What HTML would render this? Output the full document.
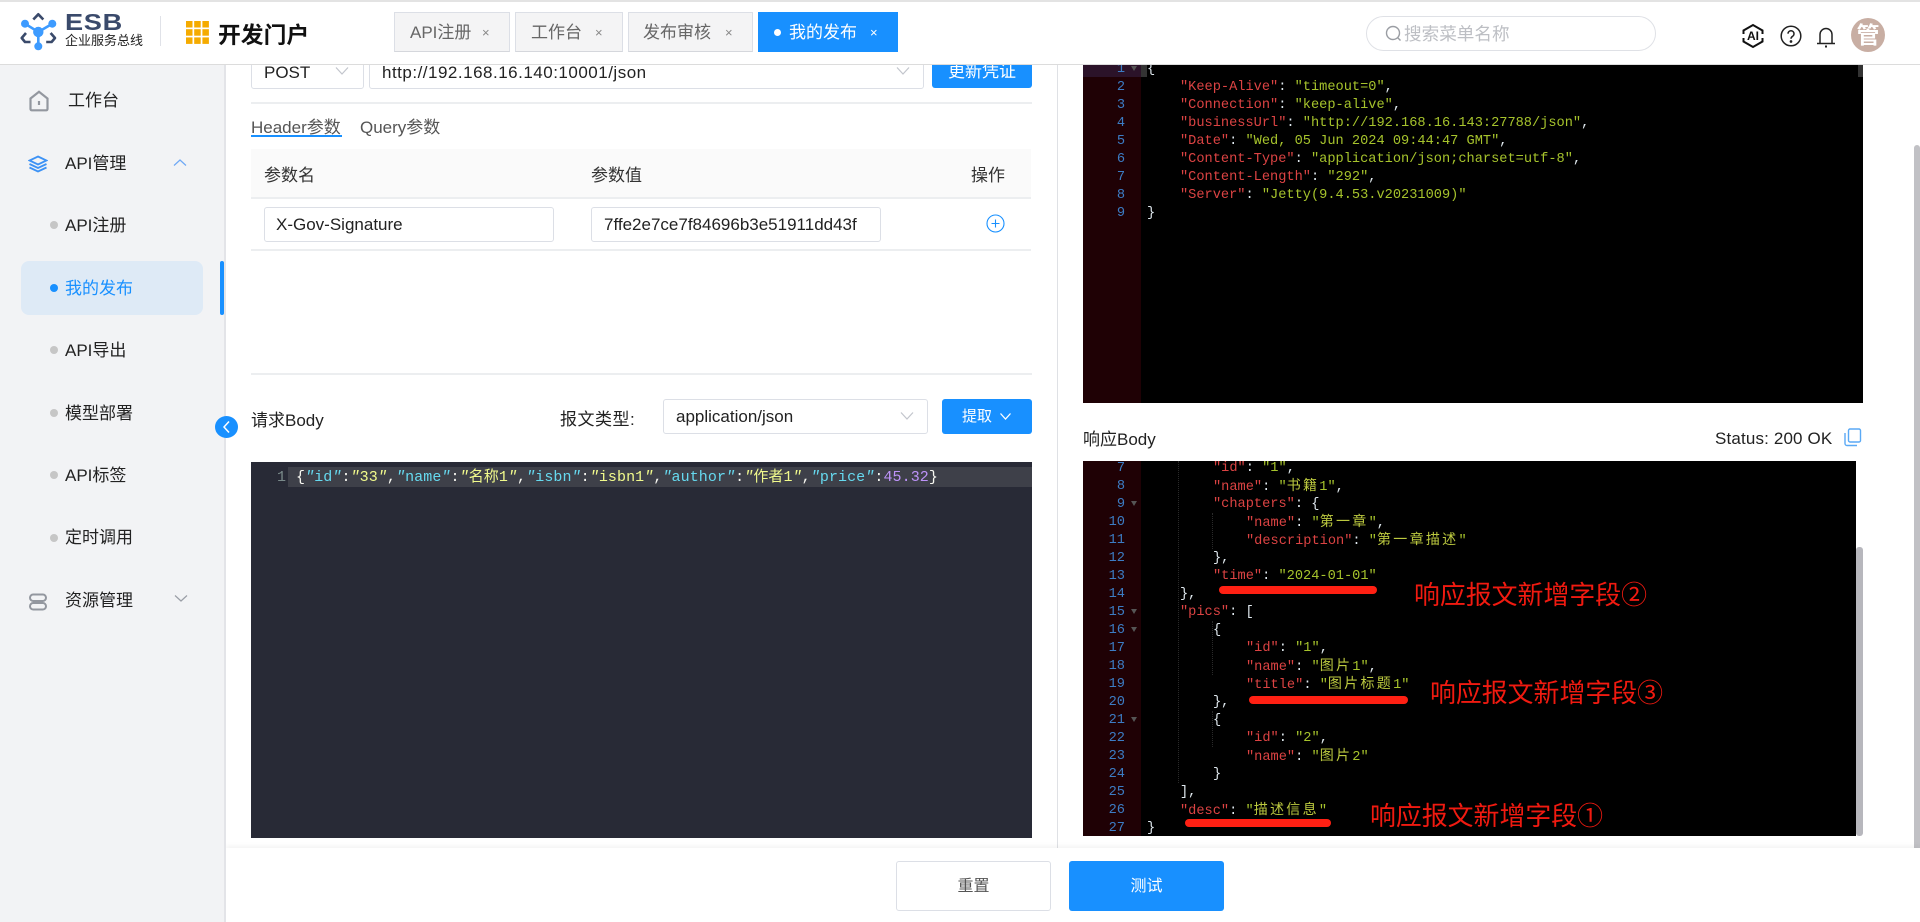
<!DOCTYPE html>
<html lang="zh-CN">
<head>
<meta charset="utf-8">
<title>ESB 开发门户</title>
<style>
*{box-sizing:border-box;margin:0;padding:0}
html,body{width:1920px;height:922px;overflow:hidden;background:#fff;font-family:"Liberation Sans","Noto Sans CJK SC",sans-serif;color:#222}
.a{position:absolute}
.t{position:absolute;white-space:nowrap;line-height:20px;height:20px;font-size:17px}
#hdr{position:absolute;left:0;top:0;width:1920px;height:65px;background:#fff;border-top:2px solid #e3e3e3;border-bottom:1px solid #dcdcdc;z-index:10}
.tab{position:absolute;top:12px;height:40px;background:#f4f4f5;border:1px solid #dcdfe6;border-bottom:1px solid #d5d7dc}
.x{position:absolute;white-space:nowrap;font-size:13px;line-height:20px;color:#888;top:23px;z-index:11}
#side{position:absolute;left:0;top:64px;width:226px;height:858px;background:#f2f3f5;border-right:2px solid #e3e4e8}
.box{position:absolute;background:#fff;border:1px solid #dcdfe6;border-radius:3px}
.dot{position:absolute;width:8px;height:8px;border-radius:50%;background:#c6c6c6;left:50px}
.hr{position:absolute;height:2px;background:#eceef0}
.btn{position:absolute;background:#1890ff;border-radius:3px;color:#fff}
.ed{position:absolute;background:#000;overflow:hidden}
.gut{position:absolute;left:0;top:0;width:58px;height:100%;background:#1f0105}
.l{position:absolute;white-space:pre;font-family:"Liberation Mono","Noto Sans CJK SC",monospace;font-size:13.65px;line-height:18px;height:18px;color:#dfe8ee;transform:translateY(2px)}
.n{position:absolute;width:42px;left:0;text-align:right;font-family:"Liberation Mono",monospace;font-size:13.65px;line-height:18px;height:18px;color:#3c7cc4;transform:translateY(2px)}
.k{color:#dc4343}.s{color:#a6c32c}.c{color:#bcc93f;letter-spacing:2.3px;font-size:14px}
.f{position:absolute;left:48px;width:0;height:0;border-left:3.5px solid transparent;border-right:3.5px solid transparent;border-top:5px solid #555}
.ann{position:absolute;white-space:nowrap;font-size:25.9px;line-height:30px;height:30px;color:#f01a10}
.stroke{position:absolute;height:8px;border-radius:4px;background:#ff2013}
.guide{position:absolute;width:0;border-left:1px dotted #2a2a2a}
#req{position:absolute;left:251px;top:462px;width:781px;height:376px;background:#282a36;overflow:hidden}
#req .cl{position:absolute;left:37px;top:5px;width:744px;height:20px;background:#3e4049}
#req pre{position:absolute;left:45px;top:6px;line-height:20px;font-family:"Liberation Mono","Noto Sans CJK SC",monospace;font-size:15px;letter-spacing:.08px;color:#f8f8f2;white-space:pre}
.q{color:#66d9ef}.y{color:#f1fa8c}.m{color:#bd93f9}.i{font-style:italic}
</style>
</head>
<body>

<!-- main left panel -->
<div class="box" style="left:251px;top:44px;width:113px;height:45px"></div>
<div class="t" style="left:264px;top:63px">POST</div>
<svg class="a" style="left:335px;top:66px" width="14" height="10" fill="none" stroke="#c2c5cc" stroke-width="1.2"><path d="M1 1.5L7 8L13 1.5"/></svg>
<div class="box" style="left:369px;top:44px;width:555px;height:45px"></div>
<div class="t" style="left:382px;top:63px;letter-spacing:.5px">http://192.168.16.140:10001/json</div>
<svg class="a" style="left:896px;top:66px" width="14" height="10" fill="none" stroke="#c2c5cc" stroke-width="1.2"><path d="M1 1.5L7 8L13 1.5"/></svg>
<div class="btn" style="left:932px;top:44px;width:100px;height:44px"></div>
<div class="t" style="left:948px;top:62px;color:#fff;font-size:17px">更新凭证</div>
<div class="hr" style="left:251px;top:102px;width:781px"></div>

<div class="t" style="left:251px;top:118px;color:#555">Header参数</div>
<div class="a" style="left:251px;top:135px;width:91px;height:2px;background:#1890ff"></div>
<div class="t" style="left:360px;top:118px;color:#555">Query参数</div>

<div class="a" style="left:251px;top:149px;width:780px;height:50px;background:#fafafa;border-bottom:2px solid #eceef0"></div>
<div class="t" style="left:264px;top:166px;color:#333">参数名</div>
<div class="t" style="left:591px;top:166px;color:#333">参数值</div>
<div class="t" style="left:971px;top:166px;color:#333">操作</div>

<div class="box" style="left:264px;top:207px;width:290px;height:35px"></div>
<div class="t" style="left:276px;top:215px">X-Gov-Signature</div>
<div class="box" style="left:591px;top:207px;width:290px;height:35px"></div>
<div class="t" style="left:604px;top:215px;width:257px;overflow:hidden">7ffe2e7ce7f84696b3e51911dd43f</div>
<svg class="a" style="left:986px;top:214px" width="19" height="19" fill="none" stroke="#1890ff" stroke-width="1.1"><circle cx="9.5" cy="9.5" r="8.5"/><path d="M9.5 5.5v8M5.5 9.5h8"/></svg>
<div class="hr" style="left:251px;top:249px;width:780px"></div>
<div class="hr" style="left:251px;top:373px;width:781px"></div>

<div class="t" style="left:251px;top:411px">请求Body</div>
<div class="t" style="left:560px;top:410px;letter-spacing:.5px">报文类型:</div>
<div class="box" style="left:663px;top:399px;width:265px;height:35px"></div>
<div class="t" style="left:676px;top:407px">application/json</div>
<svg class="a" style="left:900px;top:411px" width="14" height="10" fill="none" stroke="#c2c5cc" stroke-width="1.2"><path d="M1 1.5L7 8L13 1.5"/></svg>
<div class="btn" style="left:942px;top:399px;width:90px;height:35px"></div>
<div class="t" style="left:962px;top:407px;color:#fff;font-size:15px">提取</div>
<svg class="a" style="left:999px;top:412px" width="13" height="9" fill="none" stroke="#fff" stroke-width="1.3"><path d="M1.5 1.5L6.5 7L11.5 1.5"/></svg>

<div id="req">
  <div class="cl"></div>
  <div class="a" style="left:26px;top:6px;font:15px/20px 'Liberation Mono',monospace;color:#7a8a8a">1</div>
<pre>{<span class="q i">"</span><span class="q">id</span><span class="q i">"</span>:<span class="y i">"</span><span class="y">33</span><span class="y i">"</span>,<span class="q i">"</span><span class="q">name</span><span class="q i">"</span>:<span class="y i">"</span><span class="y">名称1</span><span class="y i">"</span>,<span class="q i">"</span><span class="q">isbn</span><span class="q i">"</span>:<span class="y i">"</span><span class="y">isbn1</span><span class="y i">"</span>,<span class="q i">"</span><span class="q">author</span><span class="q i">"</span>:<span class="y i">"</span><span class="y">作者1</span><span class="y i">"</span>,<span class="q i">"</span><span class="q">price</span><span class="q i">"</span>:<span class="m">45.32</span>}</pre>
</div>

<!-- divider -->
<div class="a" style="left:1057px;top:64px;width:1px;height:784px;background:#dfe1e5"></div>

<!-- top response editor -->
<div class="ed" style="left:1083px;top:64px;width:780px;height:339px">
  <div class="gut"></div>
  <div class="a" style="left:0;top:0;width:58px;height:13px;background:#2b1329"></div>
  <div class="a" style="left:58px;top:0;width:6px;height:13px;background:#333"></div>
  <div class="a" style="left:775px;top:0;width:5px;height:13px;background:#333"></div>
  <div class="f" style="top:2px"></div>
  <div class="n" style="top:-5px">1</div><div class="n" style="top:13px">2</div><div class="n" style="top:31px">3</div><div class="n" style="top:49px">4</div><div class="n" style="top:67px">5</div><div class="n" style="top:85px">6</div><div class="n" style="top:103px">7</div><div class="n" style="top:121px">8</div><div class="n" style="top:139px">9</div>
  <div class="l" style="left:64px;top:-5px">{</div>
  <div class="l" style="left:97px;top:13px"><span class="k">"Keep-Alive"</span>: <span class="s">"timeout=0"</span>,</div>
  <div class="l" style="left:97px;top:31px"><span class="k">"Connection"</span>: <span class="s">"keep-alive"</span>,</div>
  <div class="l" style="left:97px;top:49px"><span class="k">"businessUrl"</span>: <span class="s">"http://192.168.16.143:27788/json"</span>,</div>
  <div class="l" style="left:97px;top:67px"><span class="k">"Date"</span>: <span class="s">"Wed, 05 Jun 2024 09:44:47 GMT"</span>,</div>
  <div class="l" style="left:97px;top:85px"><span class="k">"Content-Type"</span>: <span class="s">"application/json;charset=utf-8"</span>,</div>
  <div class="l" style="left:97px;top:103px"><span class="k">"Content-Length"</span>: <span class="s">"292"</span>,</div>
  <div class="l" style="left:97px;top:121px"><span class="k">"Server"</span>: <span class="s">"Jetty(9.4.53.v20231009)"</span></div>
  <div class="l" style="left:64px;top:139px">}</div>
</div>

<div class="t" style="left:1083px;top:430px">响应Body</div>
<div class="t" style="left:1715px;top:429px;letter-spacing:.15px">Status: 200 OK</div>
<svg class="a" style="left:1843px;top:428px" width="19" height="19" fill="none" stroke="#5aa9f5" stroke-width="1.4"><rect x="5.5" y="1" width="12" height="13" rx="1.5"/><path d="M2 5v10.5a2 2 0 0 0 2 2h10"/></svg>

<!-- lower response editor -->
<div class="ed" style="left:1083px;top:461px;width:773px;height:375px">
  <div class="gut"></div>
  <div class="guide" style="left:95px;top:0;height:322px"></div>
  <div class="guide" style="left:129px;top:52px;height:36px"></div>
  <div class="guide" style="left:129px;top:160px;height:54px"></div>
  <div class="guide" style="left:129px;top:250px;height:36px"></div>
  <div class="f" style="top:40px"></div><div class="f" style="top:148px"></div><div class="f" style="top:166px"></div><div class="f" style="top:256px"></div>
  <div class="n" style="top:-3px">7</div><div class="n" style="top:15px">8</div><div class="n" style="top:33px">9</div><div class="n" style="top:51px">10</div><div class="n" style="top:69px">11</div><div class="n" style="top:87px">12</div><div class="n" style="top:105px">13</div><div class="n" style="top:123px">14</div><div class="n" style="top:141px">15</div><div class="n" style="top:159px">16</div><div class="n" style="top:177px">17</div><div class="n" style="top:195px">18</div><div class="n" style="top:213px">19</div><div class="n" style="top:231px">20</div><div class="n" style="top:249px">21</div><div class="n" style="top:267px">22</div><div class="n" style="top:285px">23</div><div class="n" style="top:303px">24</div><div class="n" style="top:321px">25</div><div class="n" style="top:339px">26</div><div class="n" style="top:357px">27</div>

  <div class="l" style="left:130px;top:-3px"><span class="k">"id"</span>: <span class="s">"1"</span>,</div>
  <div class="l" style="left:130px;top:15px"><span class="k">"name"</span>: <span class="s">"<span class="c">书籍</span>1"</span>,</div>
  <div class="l" style="left:130px;top:33px"><span class="k">"chapters"</span>: {</div>
  <div class="l" style="left:163px;top:51px"><span class="k">"name"</span>: <span class="s">"<span class="c">第一章</span>"</span>,</div>
  <div class="l" style="left:163px;top:69px"><span class="k">"description"</span>: <span class="s">"<span class="c">第一章描述</span>"</span></div>
  <div class="l" style="left:130px;top:87px">},</div>
  <div class="l" style="left:130px;top:105px"><span class="k">"time"</span>: <span class="s">"2024-01-01"</span></div>
  <div class="l" style="left:97px;top:123px">},</div>
  <div class="l" style="left:97px;top:141px"><span class="k">"pics"</span>: [</div>
  <div class="l" style="left:130px;top:159px">{</div>
  <div class="l" style="left:163px;top:177px"><span class="k">"id"</span>: <span class="s">"1"</span>,</div>
  <div class="l" style="left:163px;top:195px"><span class="k">"name"</span>: <span class="s">"<span class="c">图片</span>1"</span>,</div>
  <div class="l" style="left:163px;top:213px"><span class="k">"title"</span>: <span class="s">"<span class="c">图片标题</span>1"</span></div>
  <div class="l" style="left:130px;top:231px">},</div>
  <div class="l" style="left:130px;top:249px">{</div>
  <div class="l" style="left:163px;top:267px"><span class="k">"id"</span>: <span class="s">"2"</span>,</div>
  <div class="l" style="left:163px;top:285px"><span class="k">"name"</span>: <span class="s">"<span class="c">图片</span>2"</span></div>
  <div class="l" style="left:130px;top:303px">}</div>
  <div class="l" style="left:97px;top:321px">],</div>
  <div class="l" style="left:97px;top:339px"><span class="k">"desc"</span>: <span class="s">"<span class="c">描述信息</span>"</span></div>
  <div class="l" style="left:64px;top:357px">}</div>
</div>
<div class="a" style="left:1856px;top:547px;width:7px;height:289px;background:#b7b7bd;border-radius:3px"></div>

<div class="stroke" style="left:1219px;top:586px;width:158px"></div>
<div class="ann" style="left:1414px;top:581px">响应报文新增字段②</div>
<div class="stroke" style="left:1249px;top:696px;width:159px"></div>
<div class="ann" style="left:1430px;top:679px">响应报文新增字段③</div>
<div class="stroke" style="left:1185px;top:819px;width:146px"></div>
<div class="ann" style="left:1370px;top:802px">响应报文新增字段①</div>

<!-- page scrollbar -->
<div class="a" style="left:1914px;top:145px;width:6px;height:703px;background:#c1c1c5;border-radius:3px 3px 0 0"></div>

<!-- bottom bar -->
<div class="a" style="left:226px;top:848px;width:1694px;height:74px;background:#fff;box-shadow:0 -2px 5px rgba(0,0,0,.05)"></div>
<div class="box" style="left:896px;top:861px;width:155px;height:50px;color:#555;font-size:16px;line-height:50px;text-align:center">重置</div>
<div class="btn" style="left:1069px;top:861px;width:155px;height:50px;font-size:16px;line-height:52px;text-align:center">测试</div>

<!-- sidebar -->
<div id="side"></div>
<svg class="a" style="left:28px;top:90px" width="22" height="22" fill="none" stroke="#93979f" stroke-width="2.2"><path d="M2.5 8.5L11 1.8l8.5 6.7V19a1.3 1.3 0 0 1-1.3 1.3H3.8A1.3 1.3 0 0 1 2.5 19z"/><path d="M11 11v4"/></svg>
<div class="t" style="left:68px;top:91px">工作台</div>
<svg class="a" style="left:28px;top:155px" width="20" height="18" fill="none" stroke="#3d92f5" stroke-width="1.8"><path d="M10 1.5L18.5 5.5L10 9.5L1.5 5.5Z"/><path d="M1.5 9L10 13L18.5 9"/><path d="M1.5 12.5L10 16.5L18.5 12.5"/></svg>
<div class="t" style="left:65px;top:154px">API管理</div>
<svg class="a" style="left:173px;top:158px" width="14" height="9" fill="none" stroke="#6ea8f5" stroke-width="1.2"><path d="M1 7.5L7 2L13 7.5"/></svg>
<div class="dot" style="top:221px"></div><div class="t" style="left:65px;top:216px">API注册</div>
<div class="a" style="left:21px;top:261px;width:182px;height:54px;background:#deeaf6;border-radius:8px"></div>
<div class="a" style="left:220px;top:261px;width:4px;height:54px;background:#1890ff;border-radius:2px"></div>
<div class="dot" style="top:284px;background:#1890ff"></div><div class="t" style="left:65px;top:279px;color:#1890ff">我的发布</div>
<div class="dot" style="top:346px"></div><div class="t" style="left:65px;top:341px">API导出</div>
<div class="dot" style="top:409px"></div><div class="t" style="left:65px;top:404px">模型部署</div>
<div class="dot" style="top:471px"></div><div class="t" style="left:65px;top:466px">API标签</div>
<div class="dot" style="top:534px"></div><div class="t" style="left:65px;top:528px">定时调用</div>
<svg class="a" style="left:28px;top:593px" width="20" height="18" fill="none" stroke="#93979f" stroke-width="2"><rect x="2" y="1.5" width="16" height="6.5" rx="3.2"/><rect x="2" y="10" width="16" height="6.5" rx="3.2"/></svg>
<div class="t" style="left:65px;top:591px">资源管理</div>
<svg class="a" style="left:174px;top:594px" width="14" height="9" fill="none" stroke="#9a9ea6" stroke-width="1.2"><path d="M1 1.5L7 7L13 1.5"/></svg>
<div class="a" style="left:215px;top:416px;width:23px;height:22px;border-radius:50%;background:#1890ff;z-index:5"></div>
<svg class="a" style="left:222px;top:420px;z-index:6" width="9" height="14" fill="none" stroke="#fff" stroke-width="1.5"><path d="M7 1.5L2 7L7 12.5"/></svg>

<!-- header -->
<div id="hdr"></div>
<svg class="a" style="left:0;top:0;z-index:11" width="70" height="60" fill="none">
  <g stroke="#3d9bff" stroke-width="2.6"><path d="M25 23.7L38.3 32L52.3 23.7M38.3 32V46"/></g>
  <g fill="#3d9bff"><circle cx="38.3" cy="32" r="5.2"/><circle cx="25" cy="23.7" r="4"/><circle cx="52.3" cy="23.7" r="4"/><circle cx="38.3" cy="46.3" r="4"/></g>
  <g stroke="#3a4a6b" stroke-width="2.6" stroke-linejoin="round"><path d="M33.3 19.5L38.3 14.3L43.3 19.5"/><path d="M26 33L21.7 38L25 42H30.5"/><path d="M50.6 33L55 38L51.6 42H46.2"/></g>
</svg>
<div class="a" style="left:65px;top:11px;z-index:11;font-weight:700;font-size:23px;line-height:22px;letter-spacing:.6px;color:#3a4a6b;white-space:nowrap;transform:scaleX(1.18);transform-origin:0 50%">ESB</div>
<div class="a" style="left:65px;top:33px;z-index:11;font-size:13px;line-height:16px;color:#222;white-space:nowrap">企业服务总线</div>
<div class="a" style="left:160px;top:16px;width:1px;height:30px;background:#e0e2e8;z-index:11"></div>
<svg class="a" style="left:186px;top:21px;z-index:11" width="23" height="23" fill="#f5ab00"><rect width="6.5" height="6.5"/><rect x="8.2" width="6.5" height="6.5"/><rect x="16.4" width="6.5" height="6.5"/><rect y="8.2" width="6.5" height="6.5"/><rect x="8.2" y="8.2" width="6.5" height="6.5"/><rect x="16.4" y="8.2" width="6.5" height="6.5"/><rect y="16.4" width="6.5" height="6.5"/><rect x="8.2" y="16.4" width="6.5" height="6.5"/><rect x="16.4" y="16.4" width="6.5" height="6.5"/></svg>
<div class="a" style="left:218px;top:21px;z-index:11;font-size:22.8px;line-height:28px;font-weight:700;color:#111;white-space:nowrap">开发门户</div>

<div style="position:absolute;z-index:11;left:0;top:0">
<div class="tab" style="left:394px;width:116px"></div>
<div class="t" style="left:410px;top:23px;color:#666">API注册</div><div class="x" style="left:482px">×</div>
<div class="tab" style="left:515px;width:108px"></div>
<div class="t" style="left:531px;top:23px;color:#666">工作台</div><div class="x" style="left:595px">×</div>
<div class="tab" style="left:628px;width:125px"></div>
<div class="t" style="left:643px;top:23px;color:#666">发布审核</div><div class="x" style="left:725px">×</div>
<div class="tab" style="left:758px;width:140px;background:#1890ff;border-color:#1890ff"></div>
<div class="a" style="left:774px;top:29px;width:7px;height:7px;border-radius:50%;background:#fff"></div>
<div class="t" style="left:789px;top:23px;color:#fff">我的发布</div><div class="x" style="left:870px;color:#fff">×</div>

<div class="a" style="left:1366px;top:16px;width:290px;height:35px;border:1px solid #dfe1e6;border-radius:18px;background:#fff"></div>
<svg class="a" style="left:1385px;top:25px" width="18" height="18" fill="none" stroke="#9a9da3" stroke-width="1.4"><circle cx="8" cy="8" r="6.5"/><path d="M12.5 12.5L15.5 15.5"/></svg>
<div class="t" style="left:1404px;top:24px;color:#bdbfc4;font-size:17.6px">搜索菜单名称</div>

<svg class="a" style="left:1740px;top:23px" width="26" height="26" fill="none" stroke="#111" stroke-width="2"><path d="M3.5 11V7.5L13 2L22.5 7.5V11"/><path d="M3.5 15V18.5L13 24L22.5 18.5V15"/></svg>
<div class="a" style="left:1747px;top:29px;font-size:12px;line-height:14px;font-weight:700;color:#111;z-index:12">AI</div>
<svg class="a" style="left:1780px;top:25px" width="22" height="22" fill="none" stroke="#222" stroke-width="1.5"><circle cx="11" cy="11" r="9.8"/><path d="M8 8.7a3 3 0 1 1 4.6 2.6c-1 .6-1.6 1.2-1.6 2.5"/><circle cx="11" cy="16.5" r=".6" fill="#222"/></svg>
<svg class="a" style="left:1816px;top:25px" width="20" height="23" fill="none" stroke="#222" stroke-width="1.5"><path d="M1 18.5h18"/><path d="M4 18.5V9.5a6 6 0 0 1 12 0v9"/><path d="M9 21.5h2" stroke-width="2"/></svg>
<div class="a" style="left:1851px;top:18px;width:34px;height:34px;border-radius:50%;background:#c8aea3;color:#fff;font-size:23px;font-weight:700;line-height:34px;text-align:center">管</div>
</div>

</body>
</html>
